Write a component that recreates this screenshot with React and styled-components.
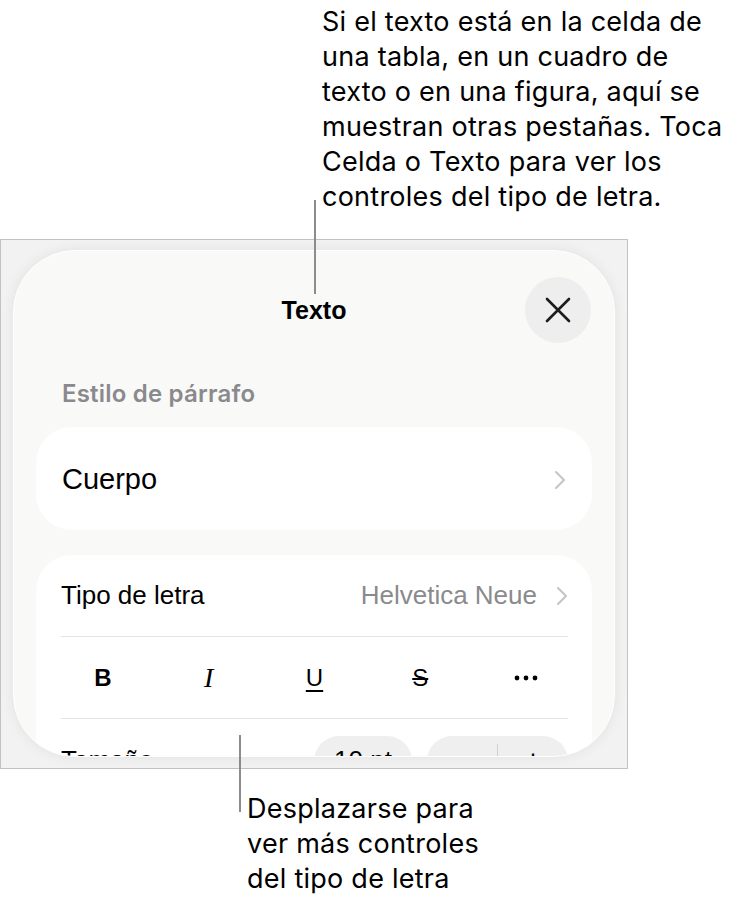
import React from "react";
import styled, { createGlobalStyle } from "styled-components";

const GlobalStyle = createGlobalStyle`
  body {
    margin: 0;
    background: #ffffff;
  }
`;

const Page = styled.div`
  position: relative;
  width: 750px;
  height: 907px;
  overflow: hidden;
  font-family: Inter, "Noto Sans", sans-serif;
  color: #000;
`;

const Callout = styled.p`
  margin: ${({ $top }) => $top}px 0 0;
  padding-left: ${({ $indent }) => $indent}px;
  font-size: 27px;
  line-height: 35px;
  letter-spacing: 0.25px;
`;

const Leader = styled.div`
  position: absolute;
  left: ${({ $left }) => $left}px;
  top: ${({ $top }) => $top}px;
  width: 2px;
  height: ${({ $height }) => $height}px;
  background: #8c8c8c;
  z-index: 2;
`;

const Frame = styled.div`
  box-sizing: border-box;
  width: 628px;
  height: 530px;
  margin-top: 25px;
  padding: 10px 12px 11px;
  border: 1px solid #c2c2c2;
  background: #f2f2f2;
`;

const Sheet = styled.div`
  box-sizing: border-box;
  height: 100%;
  border: 1.5px solid #ffffff;
  border-radius: 62px;
  background: #f9f9f8;
  box-shadow: 0 0 14px rgba(0, 0, 0, 0.07);
  overflow: hidden;
`;

const Header = styled.div`
  display: grid;
  grid-template-columns: 66px 1fr 66px;
  align-items: center;
  padding: 26px 23px 0;
`;

const Title = styled.div`
  grid-column: 2;
  text-align: center;
  font-family: "Liberation Sans", Arial, sans-serif;
  font-weight: 700;
  font-size: 25px;
`;

const CloseButton = styled.button`
  grid-column: 3;
  width: 66px;
  height: 66px;
  padding: 0;
  border: none;
  border-radius: 50%;
  background: #eeeeee;
  display: flex;
  align-items: center;
  justify-content: center;
`;

const SectionLabel = styled.div`
  margin: 37px 0 0 48px;
  font-size: 24px;
  line-height: 28px;
  font-weight: 600;
  letter-spacing: 0.2px;
  color: #8a8a8e;
`;

const Card = styled.div`
  margin: ${({ $top }) => $top}px 22px 0;
  background: #ffffff;
  border-radius: 36px;
  overflow: hidden;
`;

const StyleRow = styled.div`
  box-sizing: border-box;
  height: 103px;
  display: flex;
  align-items: center;
  justify-content: space-between;
  padding: 2px 26px 0 26px;
  font-family: "Liberation Sans", Arial, sans-serif;
  font-size: 29px;
`;

const Rows = styled.div`
  padding: 0 24px 0 25px;
`;

const Row = styled.div`
  box-sizing: border-box;
  height: ${({ $h }) => $h}px;
  display: flex;
  align-items: center;
  justify-content: space-between;
  border-top: ${({ $sep }) => ($sep ? "1.5px solid #e3e3e5" : "none")};
  font-family: "Liberation Sans", Arial, sans-serif;
  font-size: 26px;
`;

const Value = styled.span`
  display: flex;
  align-items: center;
  gap: 19px;
  color: #8a8a8e;
`;

const FormatRow = styled(Row)`
  padding: 0 30px;
`;

const Glyph = styled.span`
  width: 24px;
  display: flex;
  justify-content: center;
  font-family: ${({ $serif }) =>
    $serif ? '"Liberation Serif", serif' : '"Liberation Sans", Arial, sans-serif'};
  font-size: ${({ $size }) => $size || 24}px;
  font-weight: ${({ $bold }) => ($bold ? 700 : 400)};
  font-style: ${({ $italic }) => ($italic ? "italic" : "normal")};
  text-decoration: ${({ $deco }) => $deco || "none"};
  text-decoration-thickness: 2px;
  text-underline-offset: 4px;
`;

const Controls = styled.div`
  display: flex;
  gap: 15px;
`;

const Pill = styled.div`
  height: 50px;
  width: ${({ $w }) => $w}px;
  border-radius: 25px;
  background: #efeff0;
  display: flex;
  align-items: center;
  justify-content: center;
  font-size: 26px;
`;

const Stepper = styled(Pill)`
  justify-content: stretch;
`;

const StepHalf = styled.div`
  flex: 1;
  text-align: center;
  font-size: 30px;
  border-left: ${({ $divider }) => ($divider ? "1.5px solid #d0d0d3" : "none")};
`;

const Chevron = () => (
  <svg width="12" height="20" viewBox="0 0 12 20" fill="none">
    <path d="M2 2l8 8-8 8" stroke="#c4c4c7" strokeWidth="2" strokeLinecap="round" strokeLinejoin="round" />
  </svg>
);

const CloseIcon = () => (
  <svg width="28" height="28" viewBox="0 0 28 28" fill="none">
    <path d="M3 3l22 22M25 3L3 25" stroke="#1c1c1e" strokeWidth="2.6" strokeLinecap="round" />
  </svg>
);

const MoreIcon = () => (
  <svg width="24" height="6" viewBox="0 0 24 6">
    <circle cx="3" cy="3" r="2.4" fill="#000" />
    <circle cx="12" cy="3" r="2.4" fill="#000" />
    <circle cx="21" cy="3" r="2.4" fill="#000" />
  </svg>
);

export default function App() {
  return (
    <Page>
      <GlobalStyle />
      <Callout $top={4} $indent={322}>
        Si el texto está en la celda de
        <br />
        una tabla, en un cuadro de
        <br />
        texto o en una figura, aquí se
        <br />
        muestran otras pestañas. Toca
        <br />
        Celda o Texto para ver los
        <br />
        controles del tipo de letra.
      </Callout>
      <Leader $left={314} $top={200} $height={94} />

      <Frame>
        <Sheet>
          <Header>
            <Title>Texto</Title>
            <CloseButton>
              <CloseIcon />
            </CloseButton>
          </Header>

          <SectionLabel>Estilo de párrafo</SectionLabel>
          <Card $top={19}>
            <StyleRow>
              <span>Cuerpo</span>
              <Chevron />
            </StyleRow>
          </Card>

          <Card $top={25}>
            <Rows>
              <Row $h={81}>
                <span>Tipo de letra</span>
                <Value>
                  Helvetica Neue
                  <Chevron />
                </Value>
              </Row>
              <FormatRow $h={82} $sep>
                <Glyph $bold>B</Glyph>
                <Glyph $serif $italic $size={28}>I</Glyph>
                <Glyph $deco="underline">U</Glyph>
                <Glyph $deco="line-through">S</Glyph>
                <Glyph>
                  <MoreIcon />
                </Glyph>
              </FormatRow>
              <Row $h={84} $sep>
                <span>Tamaño</span>
                <Controls>
                  <Pill $w={98}>10 pt</Pill>
                  <Stepper $w={141}>
                    <StepHalf>−</StepHalf>
                    <StepHalf $divider>+</StepHalf>
                  </Stepper>
                </Controls>
              </Row>
            </Rows>
          </Card>
        </Sheet>
      </Frame>
      <Leader $left={239} $top={735} $height={77} />

      <Callout $top={22} $indent={247}>
        Desplazarse para
        <br />
        ver más controles
        <br />
        del tipo de letra
      </Callout>
    </Page>
  );
}
